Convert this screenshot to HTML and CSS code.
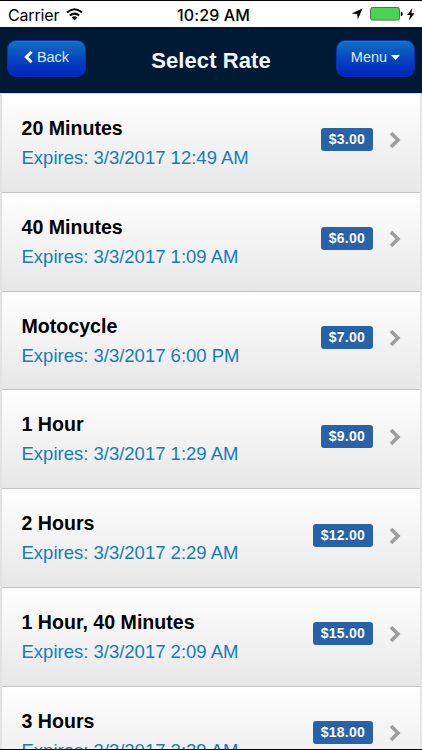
FILE: index.html
```html
<!DOCTYPE html>
<html lang="en">
<head>
<meta charset="utf-8">
<title>Select Rate</title>
<link rel="stylesheet" href="styles.css">
</head>
<body>
<div class="screen">
  <div class="status">
    <div class="carrier"><span>Carrier</span>
      <svg width="17" height="13" viewBox="0 0 17 13"><g fill="none" stroke="#000" stroke-width="2"><path d="M1 4.6Q8.5-2 16 4.6"/><path d="M3.8 7.6Q8.5 3.6 13.2 7.6"/></g><path d="M5.7 9.5Q8.5 7.2 11.3 9.5L8.5 12.4Z"/></svg>
    </div>
    <div class="clock">10:29 AM</div>
    <div class="power">
      <svg width="12" height="12" viewBox="0 0 12 12"><path d="M11.5.5L6.8 11.5L6.2 6.1L.5 5.4Z"/></svg>
      <svg class="battery" width="33" height="14" viewBox="0 0 33 14"><rect x=".5" y=".5" width="29" height="12.6" rx="2" fill="#45d552" stroke="#59705b"/><path d="M30.8 4.6Q32.8 5 32.8 6.9T30.8 9.2Z"/></svg>
      <svg width="8" height="13" viewBox="0 0 8 13"><path d="M5.4 0L.2 7.1H3.2L1.7 12.7L7.5 5.2H4.3Z"/></svg>
    </div>
  </div>
  <header class="bar">
    <div class="button back"><svg width="9" height="14" viewBox="0 0 9 14"><path d="M7.5 1.8L2.4 7L7.5 12.2" fill="none" stroke="#fff" stroke-width="3"/></svg><span>Back</span></div>
    <h1>Select Rate</h1>
    <div class="button menu"><span>Menu</span><svg width="9" height="5" viewBox="0 0 9 5"><path d="M0 0H9L4.5 5Z" fill="#fff"/></svg></div>
  </header>
  <ul class="rates">
    <li><div class="info"><h2>20 Minutes</h2><p>Expires: 3/3/2017 12:49 AM</p></div><span class="price">$3.00</span><svg class="chevron" viewBox="0 0 12 18"><path d="M2 2L9 9L2 16"/></svg></li>
    <li><div class="info"><h2>40 Minutes</h2><p>Expires: 3/3/2017 1:09 AM</p></div><span class="price">$6.00</span><svg class="chevron" viewBox="0 0 12 18"><path d="M2 2L9 9L2 16"/></svg></li>
    <li><div class="info"><h2>Motocycle</h2><p>Expires: 3/3/2017 6:00 PM</p></div><span class="price">$7.00</span><svg class="chevron" viewBox="0 0 12 18"><path d="M2 2L9 9L2 16"/></svg></li>
    <li><div class="info"><h2>1 Hour</h2><p>Expires: 3/3/2017 1:29 AM</p></div><span class="price">$9.00</span><svg class="chevron" viewBox="0 0 12 18"><path d="M2 2L9 9L2 16"/></svg></li>
    <li><div class="info"><h2>2 Hours</h2><p>Expires: 3/3/2017 2:29 AM</p></div><span class="price">$12.00</span><svg class="chevron" viewBox="0 0 12 18"><path d="M2 2L9 9L2 16"/></svg></li>
    <li><div class="info"><h2>1 Hour, 40 Minutes</h2><p>Expires: 3/3/2017 2:09 AM</p></div><span class="price">$15.00</span><svg class="chevron" viewBox="0 0 12 18"><path d="M2 2L9 9L2 16"/></svg></li>
    <li><div class="info"><h2>3 Hours</h2><p>Expires: 3/3/2017 3:29 AM</p></div><span class="price">$18.00</span><svg class="chevron" viewBox="0 0 12 18"><path d="M2 2L9 9L2 16"/></svg></li>
  </ul>
</div>
</body>
</html>
```
FILE: styles.css
```css
* { box-sizing: border-box; }
body { margin: 0; font-family: "Liberation Sans", Arial, sans-serif; }
h1, h2, p, ul { margin: 0; padding: 0; }
svg { display: block; flex: none; }
.screen {
  height: 750px;
  overflow: hidden;
  border-top: 1px solid #05050a;
  border-bottom: 1px solid #05050a;
  background: #fff;
  display: flex;
  flex-direction: column;
}
.status {
  flex: none;
  height: 26px;
  padding: 0 7px 0 8px;
  display: grid;
  grid-template-columns: 1fr auto 1fr;
  align-items: center;
  font: 16px/26px Inter, sans-serif;
  color: #000;
}
.carrier { display: flex; align-items: center; gap: 7px; font-size: 16px; letter-spacing: -.15px; }
.carrier span { padding-top: 1px; line-height: 24px; }
.clock { padding: 1px 0 0 4px; line-height: 24px; font-weight: 500; font-size: 16px; letter-spacing: .1px; }
.power { display: flex; align-items: center; justify-content: flex-end; }
.battery { margin: 0 4px 0 7px; }
.bar {
  flex: none;
  height: 66px;
  padding: 13px 7px 0;
  background: #001a36;
  display: flex;
  justify-content: space-between;
  align-items: flex-start;
}
.bar h1 {
  font-size: 22px;
  line-height: 26px;
  padding-top: 8px;
  color: #f2f6ff;
  letter-spacing: .1px;
}
.button {
  width: 79px;
  height: 37px;
  border: 1px solid #0630ae;
  border-radius: 9px;
  background: linear-gradient(#1070c6, #0647be 50%, #0023bf);
  box-shadow: inset 0 1px 0 #2678c4;
  color: #d9e9ff;
  font-size: 14.5px;
  line-height: 32px;
  padding-bottom: 3px;
  display: flex;
  align-items: center;
  justify-content: center;
}
.back { gap: 4px; }
.menu { gap: 4px; }
.rates {
  list-style: none;
  border-top: 1px solid #d5dbe6;
  border-left: 2px solid #e2e2e2;
  border-right: 2px solid #e5e5e5;
}
.rates li {
  height: 98.8px;
  border-bottom: 1px solid #c2c2c2;
  background: linear-gradient(#fff, #e7e7e7);
  box-shadow: inset 0 1px 0 #fff;
  padding: 0 19px 0 19.5px;
  display: flex;
  align-items: flex-start;
}
.info { flex: 1; padding-top: 20px; white-space: nowrap; }
.info h2 { font-size: 19.6px; line-height: 29px; color: #000; }
.info p { font-size: 18.5px; line-height: 29px; color: #147bc1; }
.price {
  height: 23px;
  margin-top: 34.4px;
  padding: 0 8px;
  border-radius: 3px;
  background: #2863a9;
  color: #fff;
  font-size: 14px;
  font-weight: bold;
  line-height: 23px;
  letter-spacing: .25px;
  text-shadow: 0 -1px 0 rgba(0, 0, 0, .25);
}
.chevron { width: 12px; height: 18px; margin: 37.4px 0 0 16px; }
.chevron path { fill: none; stroke: #9e9e9e; stroke-width: 3.6; }
```
